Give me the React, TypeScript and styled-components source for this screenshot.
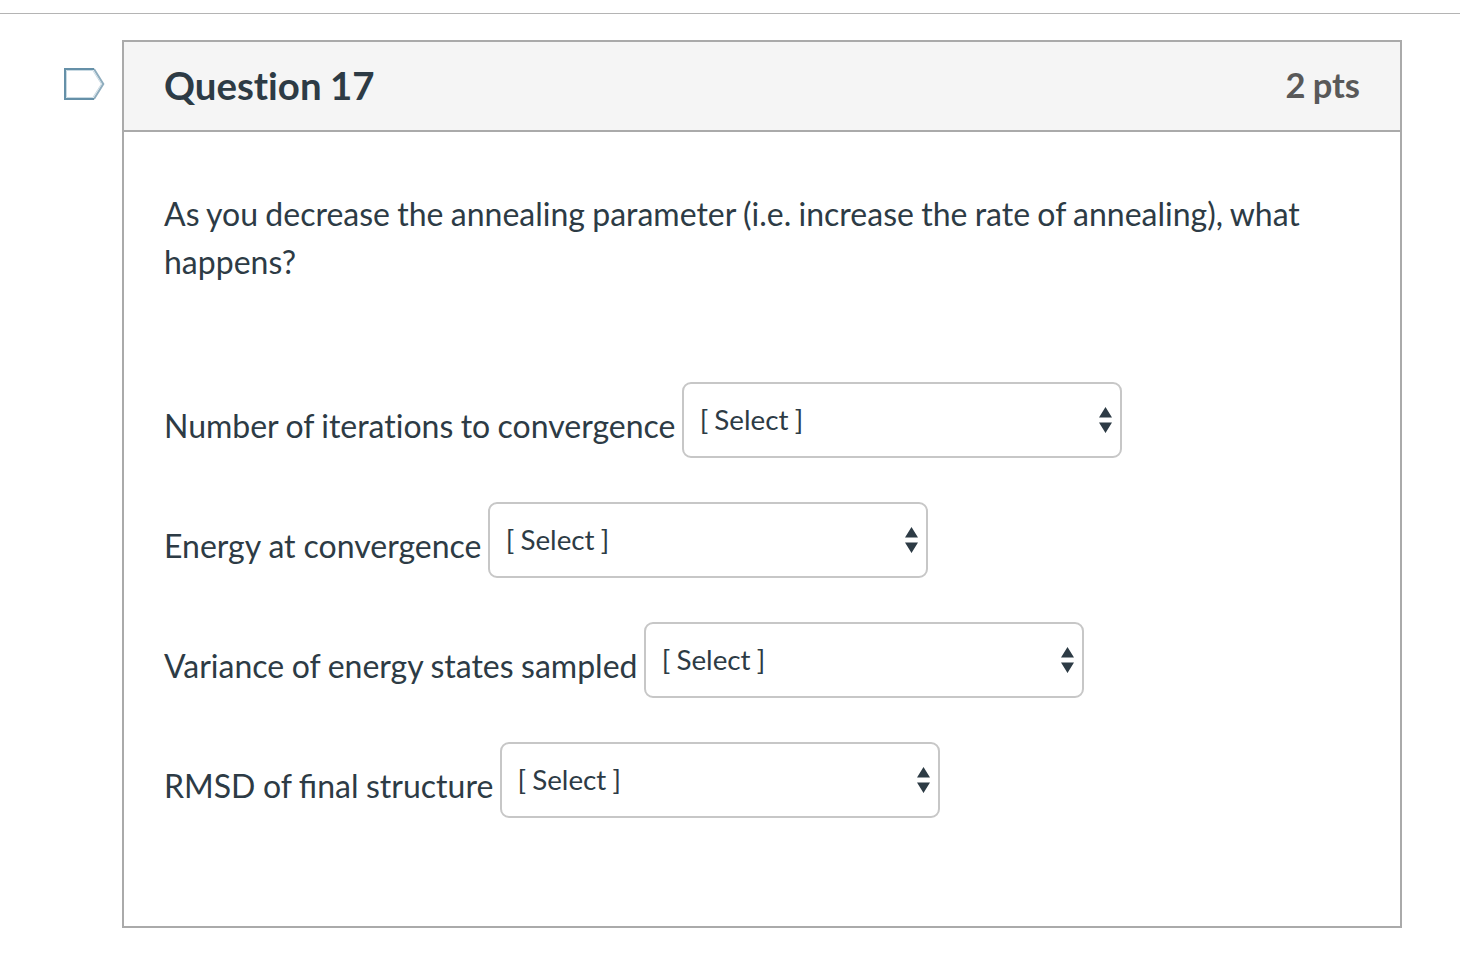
import React from "react";
import styled, { createGlobalStyle } from "styled-components";

const GlobalStyle = createGlobalStyle`
  * { box-sizing: border-box; }
  body { margin: 0; background: #fff; color: #2d3b45; font-family: Lato, "Liberation Sans", sans-serif; }
`;

const Page = styled.main`
  height: 958px;
  padding-top: 13px;
  overflow: hidden;
`;

const Divider = styled.div`
  height: 1px;
  background: #b4b4b4;
`;

const QuestionRow = styled.div`
  display: flex;
  align-items: flex-start;
  padding: 26px 58px 0 64px;
`;

const Flag = styled.svg`
  flex: none;
  width: 41px;
  height: 34px;
  margin: 27px 17px 0 0;
`;

const Card = styled.section`
  flex: 1;
  height: 888px;
  border: 2px solid #aaa;
`;

const Header = styled.header`
  display: flex;
  justify-content: space-between;
  align-items: center;
  height: 90px;
  padding: 0 40px 2px;
  background: #f5f5f5;
  border-bottom: 2px solid #aaa;
`;

const Title = styled.h1`
  margin: 0;
  font-size: 38.4px;
  font-weight: 700;
  line-height: 48px;
  word-spacing: -0.9px;
  font-variant-ligatures: no-common-ligatures;
`;

const Points = styled.span`
  font-size: 34.5px;
  font-weight: 700;
  line-height: 48px;
  word-spacing: -1.2px;
  color: #595959;
`;

const Body = styled.div`
  padding: 58px 40px 0;
`;

const Prompt = styled.p`
  margin: 0 0 96px;
  font-size: 32px;
  line-height: 48px;
  word-spacing: -0.9px;
`;

const Answer = styled.div`
  display: flex;
  align-items: flex-start;
  height: 76px;
  margin-bottom: 44px;
`;

const Label = styled.label<{ $ligatures?: boolean; $spacing: number }>`
  padding-top: 20px;
  margin-right: 6.7px;
  font-size: 32px;
  line-height: 48px;
  word-spacing: ${(p) => p.$spacing}px;
  white-space: nowrap;
  font-variant-ligatures: ${(p) => (p.$ligatures ? "normal" : "no-common-ligatures")};
`;

const SelectBox = styled.button`
  display: flex;
  justify-content: space-between;
  align-items: center;
  width: 440px;
  height: 76px;
  padding: 0 8px 0 15.5px;
  border: 2px solid #c7c7c7;
  border-radius: 9px;
  background: #fff;
  color: inherit;
  font: 400 27.8px/40px Lato, "Liberation Sans", sans-serif;
  word-spacing: -0.9px;
`;

const SelectValue = styled.span`
  padding-bottom: 1px;
`;

const answers = [
  { text: "Number of iterations to convergence", spacing: -0.84 },
  { text: "Energy at convergence", spacing: -0.2 },
  { text: "Variance of energy states sampled", spacing: -0.68 },
  { text: "RMSD of final structure", spacing: -0.7, ligatures: true },
];

export default function App() {
  return (
    <Page>
      <GlobalStyle />
      <Divider />
      <QuestionRow>
        <Flag viewBox="0 0 41 34" fill="none">
          <path d="M2.5 3.5H28.8L37.4 17L28.8 30.5H2.5Z" stroke="#c9dae3" />
          <path d="M30 2L39.3 17L30 32" stroke="#8fadbe" strokeWidth="2" />
          <path d="M30 2H1V32H30" stroke="#6590a8" strokeWidth="2" />
        </Flag>
        <Card>
          <Header>
            <Title>Question 17</Title>
            <Points>2 pts</Points>
          </Header>
          <Body>
            <Prompt>
              As you decrease the annealing parameter (i.e. increase the rate of annealing), what happens?
            </Prompt>
            {answers.map(({ text, spacing, ligatures }) => (
              <Answer key={text}>
                <Label $ligatures={ligatures} $spacing={spacing}>{text}</Label>
                <SelectBox type="button">
                  <SelectValue>[ Select ]</SelectValue>
                  <svg width="13" height="26" viewBox="0 0 13 26" fill="#2d3b45">
                    <path d="M0 10.5L6.5 0L13 10.5ZM0 15.5H13L6.5 26Z" />
                  </svg>
                </SelectBox>
              </Answer>
            ))}
          </Body>
        </Card>
      </QuestionRow>
    </Page>
  );
}
